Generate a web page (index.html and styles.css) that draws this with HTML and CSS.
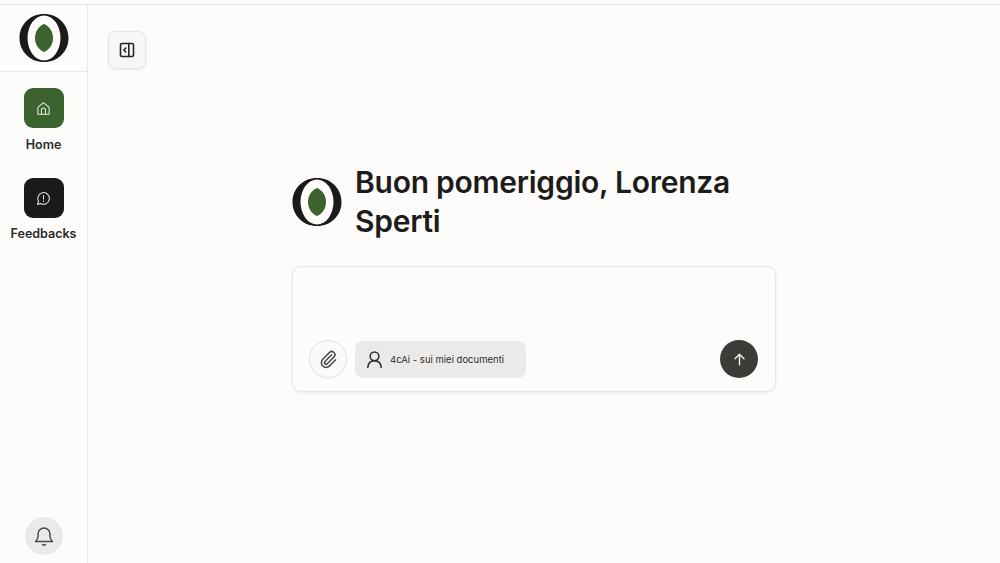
FILE: index.html
```html
<!DOCTYPE html>
<html lang="it">
<head>
<meta charset="utf-8">
<title>Home</title>
<link rel="stylesheet" href="styles.css">
</head>
<body>
<div class="topline"></div>
<div class="app">
  <aside class="sidebar">
    <div class="brand">
      <svg class="logo" viewBox="0 0 50 48"><use href="#mark"/></svg>
    </div>
    <nav class="nav">
      <a class="nav-item">
        <span class="nav-icon green">
          <svg viewBox="0 0 16 16" class="ico"><path d="M2 6.800 8 1.800l6 5v7.400H2Z"/><path d="M5.800 14.200V9.700a2.200 2.200 0 0 1 4.400 0v4.500"/></svg>
        </span>
        <span class="nav-label">Home</span>
      </a>
      <a class="nav-item">
        <span class="nav-icon black">
          <svg viewBox="0 0 16 16" class="ico"><path d="M1.500 14.500 2.700 11A6.200 6.200 0 1 1 5 13.300Z"/><path d="M8 4.800v3.700M8 10.500v.4"/></svg>
        </span>
        <span class="nav-label">Feedbacks</span>
      </a>
    </nav>
    <button class="bell">
      <svg viewBox="0 0 24 24"><path d="M3.500 17.500c1.500-1.300 2.500-2.700 2.500-5V10a6 6 0 0 1 12 0v2.500c0 2.300 1 3.700 2.500 5Z"/><path d="M10.500 20.500c.8.700 2.200.7 3 0"/></svg>
    </button>
  </aside>
  <main class="main">
    <div class="toolbar">
      <button class="toggle">
        <svg viewBox="0 0 16 16"><rect x="1.500" y="1.500" width="13" height="13" rx="1.500"/><path d="M9.800 1.500v13M6.800 6 4.800 8l2 2"/></svg>
      </button>
    </div>
    <section class="center">
      <div class="greeting">
        <svg class="logo" viewBox="0 0 50 48"><use href="#mark"/></svg>
        <h1>Buon pomeriggio, Lorenza Sperti</h1>
      </div>
      <div class="composer">
        <div class="composer-row">
          <button class="attach">
            <svg viewBox="0 0 24 24"><path d="M13.234 20.252 21 12.300"/><path d="m16 6-8.414 8.586a2 2 0 0 0 0 2.828 2 2 0 0 0 2.828 0l8.414-8.586a4 4 0 0 0 0-5.656 4 4 0 0 0-5.656 0l-8.415 8.585a6 6 0 1 0 8.486 8.486"/></svg>
          </button>
          <div class="source">
            <svg viewBox="0 0 24 24"><circle cx="12" cy="8" r="5.500"/><path d="M3.500 22c.5-5.500 3.500-8.500 8.500-8.500s8 3 8.500 8.500"/></svg>
            <span>4cAi - sui miei documenti</span>
          </div>
          <button class="send">
            <svg viewBox="0 0 16 16"><path d="M8 14.500V1.500M2.500 7 8 1.500 13.500 7"/></svg>
          </button>
        </div>
      </div>
    </section>
  </main>
</div>
<svg class="defs" width="0" height="0">
  <symbol id="mark" viewBox="0 0 50 48">
    <path fill="#1b1a18" fill-rule="evenodd" d="M25 0C11 0 .5 10.500.5 24S11 48 25 48s24.500-10.500 24.500-24S39 0 25 0Zm0 1.500a16.500 22.500 0 0 1 0 45 16.500 22.500 0 0 1 0-45Z"/>
    <path fill="#3c622d" d="M25 10C31 12.500 34 18 34 24S31 35.500 25 38C19 35.500 16 30 16 24S19 12.500 25 10Z"/>
  </symbol>
</svg>
</body>
</html>
```
FILE: styles.css
```css
* { box-sizing: border-box; }
html, body { margin: 0; height: 100%; overflow: hidden; }
body {
  background: #fdfcfb;
  color: #1d1c1a;
  font-family: "Inter", "Liberation Sans", sans-serif;
  display: flex;
  flex-direction: column;
}
.defs { position: absolute; }
.topline { height: 5px; flex: none; border-bottom: 1px solid #e6e1ee; }
.app { flex: 1; display: flex; min-height: 0; }
.sidebar {
  width: 88px;
  flex: none;
  border-right: 1px solid #e9e8e6;
  display: flex;
  flex-direction: column;
}
.brand {
  height: 67px;
  flex: none;
  border-bottom: 1px solid #e9e8e6;
  display: flex;
  align-items: center;
  justify-content: center;
}
.logo { width: 50px; height: 48px; flex: none; }
.nav { display: flex; flex-direction: column; align-items: center; gap: 25px; padding-top: 16px; flex: 1; }
.nav-item { display: flex; flex-direction: column; align-items: center; gap: 9px; }
.nav-item + .nav-item { gap: 8px; }
.nav-icon { width: 40px; height: 40px; border-radius: 9px; display: flex; align-items: center; justify-content: center; }
.green { background: #3c622d; }
.black { background: #1b1a18; }
.ico { width: 15px; height: 15px; fill: none; stroke: #e9e8e3; stroke-width: 1.100; stroke-linejoin: round; stroke-linecap: round; }
.nav-label { font-size: 12.500px; line-height: 16px; font-weight: 600; white-space: nowrap; color: #2a2927; }
.bell {
  width: 38px; height: 38px; border-radius: 50%; border: 0; background: #ebeae8; padding: 0;
  align-self: center; margin-bottom: 8px;
  display: flex; align-items: center; justify-content: center;
}
.bell svg { width: 24px; height: 24px; fill: none; stroke: #4a4946; stroke-width: 1.500; stroke-linecap: round; stroke-linejoin: round; }
.main { flex: 1; display: flex; flex-direction: column; min-width: 0; }
.toolbar { padding: 26px 0 0 20px; height: 158px; flex: none; }
.toggle {
  width: 38px; height: 38px; border-radius: 8px; border: 1px solid #e6e5e2; background: #f8f7f5;
  padding: 0; display: flex; align-items: center; justify-content: center;
  box-shadow: 0 1px 3px rgba(0,0,0,.08);
}
.toggle svg { width: 16px; height: 16px; fill: none; stroke: #26251f; stroke-width: 1.600; stroke-linejoin: round; stroke-linecap: round; }
.center { width: 484px; margin-left: 204px; display: flex; flex-direction: column; gap: 25px; }
.greeting { display: flex; align-items: center; gap: 13px; }
h1 { margin: 0; font-size: 30px; line-height: 39px; font-weight: 600; letter-spacing: -.25px; color: #1d1c1a; }
.composer {
  height: 126px; border: 1px solid #e7e6e3; border-radius: 9px; background: #fdfcfb;
  box-shadow: 0 1px 3px rgba(0,0,0,.07);
  padding: 73px 17px 12px 16px;
}
.composer-row { display: flex; align-items: center; gap: 8px; }
.attach {
  width: 38px; height: 38px; border-radius: 50%; border: 1px solid #e4e3e0; background: #fbfaf8; padding: 0;
  display: flex; align-items: center; justify-content: center; box-shadow: 0 1px 2px rgba(0,0,0,.05);
}
.attach svg { width: 19px; height: 19px; fill: none; stroke: #4b4a47; stroke-width: 2; stroke-linecap: round; stroke-linejoin: round; }
.source {
  width: 171px; height: 37px; border-radius: 8px; background: #ebeae8; display: flex; align-items: center;
  gap: 6px; padding-left: 10px; font-size: 9.500px; color: #2f2e2b;
}
.source svg { width: 19px; height: 19px; flex: none; fill: none; stroke: #2f2e2b; stroke-width: 2; stroke-linecap: round; }
.send {
  width: 38px; height: 38px; border-radius: 50%; border: 0; background: #3c3b37; padding: 0; margin-left: auto;
  display: flex; align-items: center; justify-content: center;
}
.send svg { width: 13px; height: 13px; fill: none; stroke: #f3f2ef; stroke-width: 1.700; stroke-linecap: round; stroke-linejoin: round; }
```
